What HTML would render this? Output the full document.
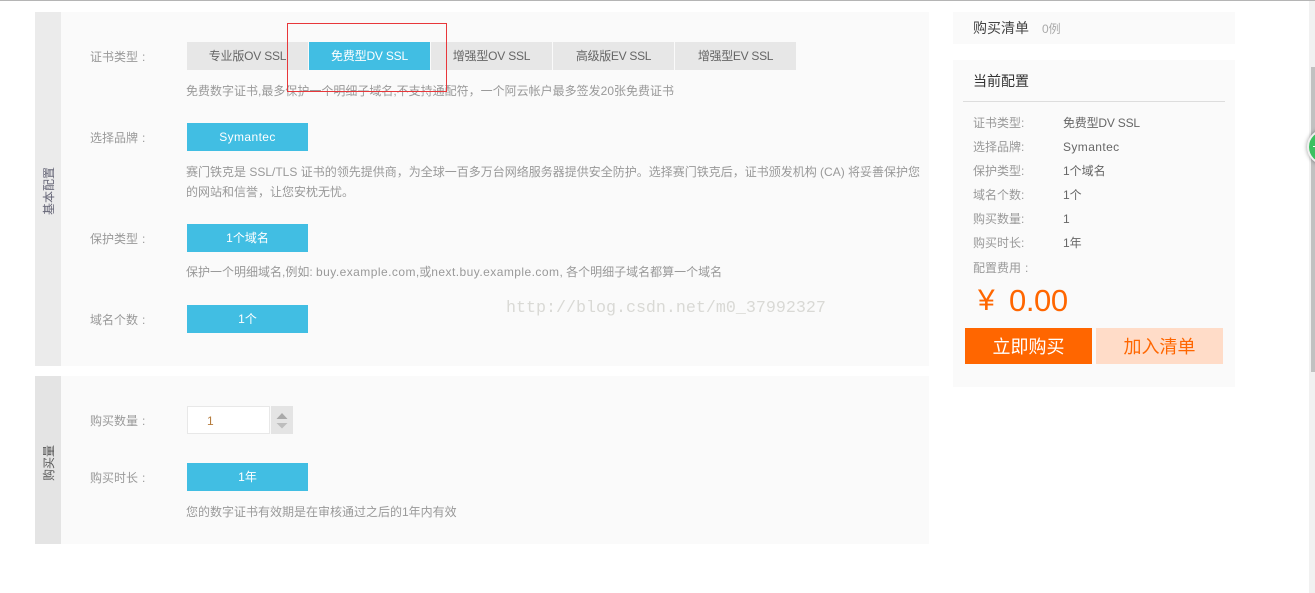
<!DOCTYPE html>
<html lang="zh-CN">
<head>
<meta charset="utf-8">
<title>证书</title>
<style>
html,body{margin:0;padding:0;background:#fff}
body{width:1315px;height:593px;position:relative;overflow:hidden;font-family:"Liberation Sans","Noto Sans CJK SC",sans-serif;font-size:12px;color:#666}
.a{position:absolute}
.t{position:absolute;white-space:nowrap;line-height:20px;height:20px}
.l{color:#999;left:90px}
.d{color:#999;left:186px}
.b{position:absolute;height:28px;line-height:28px;text-align:center;width:121px;background:#41bee3;color:#fff;left:187px}
.g{background:#e7e7e7;color:#666}
.s{letter-spacing:-.2px}
.k{color:#999;left:973px}
.v{color:#666;left:1063px}
.c{margin-left:4px}
</style>
</head>
<body>
<div class="a" style="left:0;top:0;width:1315px;height:1px;background:#b5b5b5"></div>

<div class="a" style="left:35px;top:12px;width:894px;height:354px;background:#fafafa"></div>
<div class="a" style="left:35px;top:12px;width:26px;height:354px;background:#ebebeb"></div>
<div class="a" style="left:35px;top:376px;width:894px;height:168px;background:#fafafa"></div>
<div class="a" style="left:35px;top:376px;width:26px;height:168px;background:#e4e4e4"></div>
<div class="t" style="left:19px;top:181px;width:60px;text-align:center;transform:rotate(-90deg);color:#667">基本配置</div>
<div class="t" style="left:19px;top:453px;width:60px;text-align:center;transform:rotate(-90deg);color:#555">购买量</div>

<div class="t l" style="top:47px">证书类型<span class="c">:</span></div>
<div class="b g s" style="top:42px;left:187px">专业版OV SSL</div>
<div class="b s" style="top:42px;left:309px">免费型DV SSL</div>
<div class="b g s" style="top:42px;left:431px">增强型OV SSL</div>
<div class="b g s" style="top:42px;left:553px;letter-spacing:-.3px">高级版EV SSL</div>
<div class="b g s" style="top:42px;left:675px;letter-spacing:-.3px">增强型EV SSL</div>
<div class="t d" style="top:81px">免费数字证书,最多保护一个明细子域名,不支持通配符，一个阿云帐户最多签发20张免费证书</div>

<div class="t l" style="top:128px">选择品牌<span class="c">:</span></div>
<div class="b" style="top:123px;letter-spacing:.4px">Symantec</div>
<div class="t d" style="top:162px">赛门铁克是 SSL/TLS 证书的领先提供商，为全球一百多万台网络服务器提供安全防护。选择赛门铁克后，证书颁发机构 (CA) 将妥善保护您</div>
<div class="t d" style="top:182px">的网站和信誉，让您安枕无忧。</div>

<div class="t l" style="top:229px">保护类型<span class="c">:</span></div>
<div class="b" style="top:224px">1个域名</div>
<div class="t d" style="top:262px">保护一个明细域名,例如: <span style="letter-spacing:.45px">buy.example.com</span>,或<span style="letter-spacing:.45px">next.buy.example.com</span>, 各个明细子域名都算一个域名</div>

<div class="t l" style="top:310px">域名个数<span class="c">:</span></div>
<div class="b" style="top:305px">1个</div>

<div class="t" style="left:506px;top:299px;font-family:'Liberation Mono',monospace;font-size:16.67px;color:#d9d9d5">http://blog.csdn.net/m0_37992327</div>

<div class="t l" style="top:411px">购买数量<span class="c">:</span></div>
<div class="a" style="left:187px;top:406px;width:81px;height:26px;background:#fff;border:1px solid #e8e8e8"></div>
<div class="t" style="left:207px;top:411px;color:#b57b3c">1</div>
<div class="a" style="left:271px;top:406px;width:22px;height:28px;background:#e4e4e4"></div>
<svg class="a" style="left:271px;top:406px" width="22" height="28"><path d="M5.5 13L11 7L16.5 13Z" fill="#a9a9a9"/><path d="M5.5 17H16.5L11 22.5Z" fill="#bdbdbd"/></svg>

<div class="t l" style="top:468px">购买时长<span class="c">:</span></div>
<div class="b" style="top:463px">1年</div>
<div class="t d" style="top:502px">您的数字证书有效期是在审核通过之后的1年内有效</div>

<div class="a" style="left:287px;top:23px;width:158px;height:67px;border:1px solid #e8373a"></div>

<div class="a" style="left:953px;top:12px;width:282px;height:32px;background:#fafafa"></div>
<div class="t" style="left:973px;top:18px;font-size:14px;color:#444">购买清单</div>
<div class="t" style="left:1042px;top:19px;color:#aaa">0例</div>

<div class="a" style="left:953px;top:60px;width:282px;height:327px;background:#fafafa"></div>
<div class="t" style="left:973px;top:71px;font-size:14px;color:#333">当前配置</div>
<div class="a" style="left:963px;top:101px;width:262px;height:1px;background:#ddd"></div>

<div class="t k" style="top:113px">证书类型:</div><div class="t v s" style="top:113px;letter-spacing:-.2px">免费型DV SSL</div>
<div class="t k" style="top:137px">选择品牌:</div><div class="t v" style="top:137px;letter-spacing:.4px">Symantec</div>
<div class="t k" style="top:161px">保护类型:</div><div class="t v" style="top:161px">1个域名</div>
<div class="t k" style="top:185px">域名个数:</div><div class="t v" style="top:185px">1个</div>
<div class="t k" style="top:209px">购买数量:</div><div class="t v" style="top:209px">1</div>
<div class="t k" style="top:233px">购买时长:</div><div class="t v" style="top:233px">1年</div>
<div class="t k" style="top:258px">配置费用<span class="c">:</span></div>
<div class="a" style="left:978px;top:282px;font-size:30px;line-height:38px;color:#ff6600;white-space:nowrap">¥</div>
<div class="a" style="left:1009px;top:282px;font-size:31px;line-height:38px;color:#ff6600;white-space:nowrap;letter-spacing:-.4px">0.00</div>

<div class="a" style="left:965px;top:328px;width:127px;height:36px;line-height:39px;text-align:center;background:#ff6600;color:#fff;font-size:18px">立即购买</div>
<div class="a" style="left:1096px;top:328px;width:127px;height:36px;line-height:39px;text-align:center;background:#ffdcc8;color:#ff6600;font-size:18px">加入清单</div>

<div class="a" style="left:1309px;top:1px;width:6px;height:592px;background:#f1f1f1"></div>
<div class="a" style="left:1311px;top:67px;width:4px;height:305px;background:#c1c1c1"></div>
<div class="a" style="left:1307px;top:129px;width:36px;height:36px;box-sizing:border-box;border-radius:50%;background:#3cc060;border:2px solid #f0f0f0;box-shadow:0 0 4px rgba(0,0,0,.4)"></div>
<div class="a" style="left:1313px;top:146px;width:2px;height:1px;background:#fff"></div>
</body>
</html>
